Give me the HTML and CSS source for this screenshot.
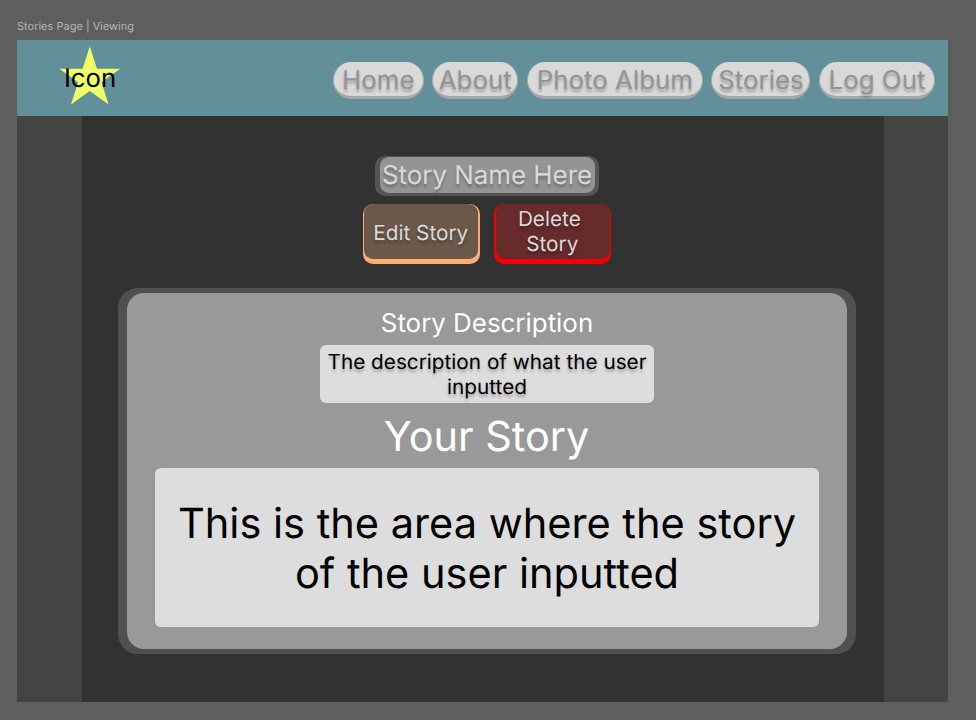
FILE: index.html
```html
<!DOCTYPE html>
<html lang="en">
<head>
<meta charset="utf-8">
<title>Stories Page | Viewing</title>
<link rel="stylesheet" href="styles.css">
</head>
<body>
<div class="frame-label">Stories Page | Viewing</div>
<div class="frame">
  <header class="topbar">
    <div class="logo">
      <svg class="star" viewBox="0 0 62 60" width="62" height="60"><path fill="#eeff66" d="M30.8 0.5 38 22.7H61.3L42.5 36.3 49.6 58.6 30.8 44.9 12 58.6 19.1 36.3.3 22.7H23.6Z"/></svg>
      <span class="logo-text">Icon</span>
    </div>
    <nav class="nav">
      <a class="pill home">Home</a>
      <a class="pill about">About</a>
      <a class="pill album">Photo Album</a>
      <a class="pill stories">Stories</a>
      <a class="pill logout">Log Out</a>
    </nav>
  </header>
  <main class="content">
    <h1 class="story-name"><span>Story Name Here</span></h1>
    <div class="actions">
      <button class="btn edit"><span>Edit Story</span></button>
      <button class="btn delete"><span>Delete&nbsp;<br>Story</span></button>
    </div>
    <section class="card">
      <div class="card-inner">
        <h2 class="desc-title">Story Description</h2>
        <p class="desc">The description of what the user<br>inputted</p>
        <h2 class="story-title">Your Story</h2>
        <p class="story">This is the area where the story<br>of the user inputted</p>
      </div>
    </section>
  </main>
</div>
</body>
</html>
```
FILE: styles.css
```css
* { box-sizing: border-box; }
body {
  margin: 0;
  height: 720px;
  overflow: hidden;
  background: #5e5e5e;
  font-family: Inter, "Liberation Sans", sans-serif;
  font-weight: 370;
  text-rendering: geometricPrecision;
  padding: 0 28px 0 17px;
}
h1, h2, p { margin: 0; font-weight: inherit; }
.frame-label {
  height: 40px;
  padding-top: 19px;
  font-size: 11px;
  line-height: 15px;
  color: #b4b4b4;
}
.frame {
  width: 931px;
  height: 662px;
  background: #444;
}
.topbar {
  height: 76px;
  background: #62909a;
  display: flex;
  justify-content: space-between;
  padding: 0 13px 0 42px;
}
.logo {
  display: grid;
  width: 62px;
  height: 60px;
  margin-top: 6px;
}
.star, .logo-text { grid-area: 1 / 1; }
.logo-text {
  font-size: 25.7px;
  line-height: 31px;
  justify-self: center;
  margin-top: 17px;
  color: #000;
}
.nav {
  display: flex;
  gap: 8.6px;
  padding-top: 22px;
}
.pill {
  height: 37px;
  border: 1px solid #a6a6a6;
  border-width: 0 1px 3px;
  border-radius: 18px;
  background: #d9d9d9;
  color: #949494;
  font-size: 25.9px;
  line-height: 37px;
  text-align: center;
  white-space: nowrap;
  text-shadow: 0 2.6px 2.6px rgba(0, 0, 0, .25);
}
.home { width: 90.8px; }
.about { width: 86px; }
.album { width: 176px; }
.stories { width: 99px; }
.logout { width: 116px; }
.content {
  width: 802px;
  height: 586px;
  margin-left: 65px;
  padding-top: 40px;
  background: #323232;
  display: flex;
  flex-direction: column;
  align-items: center;
}
.story-name {
  width: 224px;
  height: 40px;
  margin-left: 8px;
  padding: 1px 4.5px 3px;
  border-radius: 10px;
  background: #555;
}
.story-name span {
  display: block;
  height: 36px;
  border-radius: 9px;
  background: #949494;
  color: #d9d9d9;
  font-size: 25.9px;
  line-height: 37px;
  text-align: center;
  white-space: nowrap;
  text-shadow: 0 2.6px 2.6px rgba(0, 0, 0, .25);
}
.actions {
  display: flex;
  gap: 14.5px;
  margin: 7.5px 0 0 8px;
}
.btn {
  width: 117px;
  height: 60.5px;
  padding: 0;
  border: 0;
  border-radius: 10px;
  color: #d9d9d9;
  font-family: inherit;
  font-size: 20.75px;
  font-weight: inherit;
  line-height: 25px;
  text-rendering: inherit;
  text-shadow: 0 2.6px 2.6px rgba(0, 0, 0, .25);
}
.btn span {
  display: flex;
  align-items: center;
  justify-content: center;
  height: 55px;
  margin: 0 1.7px 5.5px;
  border-radius: 9px;
}
.edit { background: #ffac73; }
.edit span { background: #6b584a; padding: 4.5px 1px 0 0; }
.delete { background: #f50000; }
.delete span { background: #672b2b; padding: 2.5px 1px 0 0; }
.card {
  width: 738.5px;
  height: 366px;
  margin: 24px 0 0 8px;
  padding: 5px 9px;
  border-radius: 20px;
  background: #505050;
}
.card-inner {
  height: 355.5px;
  padding-top: 14px;
  border-radius: 17px;
  background: #999;
  display: flex;
  flex-direction: column;
  align-items: center;
  text-align: center;
}
.desc-title {
  color: #fff;
  font-size: 25.9px;
  line-height: 33px;
}
.desc {
  width: 334.5px;
  height: 58px;
  margin-top: 5px;
  padding-top: 5px;
  border-radius: 6px;
  background: #ddd;
  font-size: 20.75px;
  line-height: 25px;
  white-space: nowrap;
  text-shadow: 0 2.6px 2.6px rgba(0, 0, 0, .25);
}
.story-title {
  margin: 8px 1px 0 0;
  color: #fff;
  font-size: 41.4px;
  line-height: 50px;
}
.story {
  width: 664px;
  height: 158.5px;
  margin-top: 7px;
  padding-top: 31px;
  border-radius: 6px;
  background: #ddd;
  font-size: 41.55px;
  line-height: 50px;
  white-space: nowrap;
}
```
